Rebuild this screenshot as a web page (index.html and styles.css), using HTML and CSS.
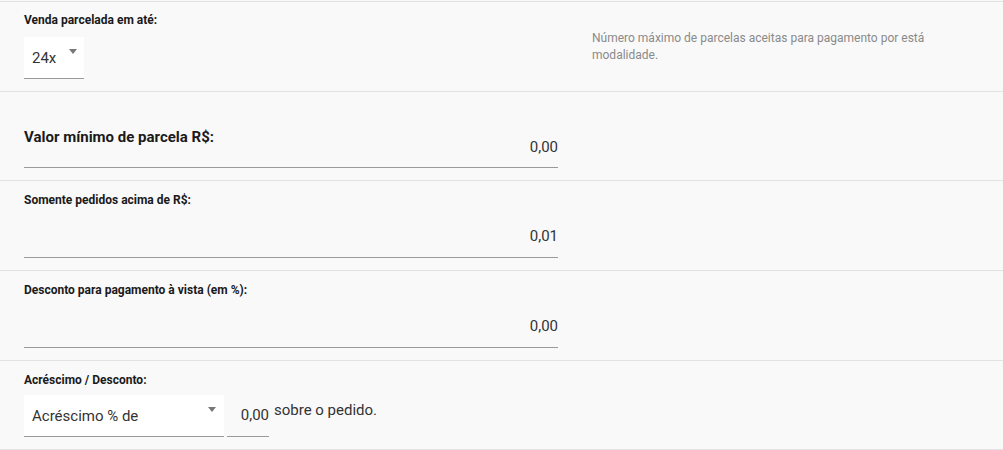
FILE: index.html
```html
<!DOCTYPE html>
<html lang="pt-BR">
<head>
<meta charset="utf-8">
<title>Parcelamento</title>
<link rel="stylesheet" href="styles.css">
</head>
<body>
<div class="form">
  <section class="row row-split">
    <div class="col-main">
      <div class="label">Venda parcelada em até:</div>
      <div class="select select-small">
        <span class="select-text">24x</span>
        <span class="caret"></span>
      </div>
    </div>
    <p class="help">Número máximo de parcelas aceitas para pagamento por está modalidade.</p>
  </section>

  <section class="row row-big">
    <div class="field-inline">
      <span class="label-big">Valor mínimo de parcela R$:</span>
      <span class="value-inline">0,00</span>
    </div>
  </section>

  <section class="row">
    <div class="label">Somente pedidos acima de R$:</div>
    <div class="input">0,01</div>
  </section>

  <section class="row">
    <div class="label">Desconto para pagamento à vista (em %):</div>
    <div class="input">0,00</div>
  </section>

  <section class="row">
    <div class="label">Acréscimo / Desconto:</div>
    <div class="combo">
      <div class="select select-wide">
        <span class="select-text">Acréscimo % de</span>
        <span class="caret"></span>
      </div>
      <div class="input-small">0,00</div>
      <span class="suffix">sobre o pedido.</span>
    </div>
  </section>
</div>
</body>
</html>
```

FILE: styles.css
```css
html, body {
  margin: 0;
  padding: 0;
  background: #f9f9f9;
  font-family: Roboto, "Liberation Sans", Arial, sans-serif;
  color: #212121;
}

.form {
  padding-top: 1px;
  width: 1003px;
}

.row {
  border-top: 1px solid #e2e2e2;
  padding: 12px 24px 12px;
}

.row:last-child {
  border-bottom: 1px solid #e2e2e2;
}

.row-split {
  display: flex;
  padding-top: 11px;
}

.col-main {
  width: 534px;
  flex: none;
}

.label {
  font-size: 12px;
  font-weight: 700;
  line-height: 14px;
  color: #1a1a1a;
}

.select {
  background: #ffffff;
  border-bottom: 1px solid #9a9a9a;
  position: relative;
  box-sizing: border-box;
  height: 42px;
  display: flex;
  align-items: center;
  padding-left: 8px;
  font-size: 15px;
  color: #333;
}

.select-small {
  width: 60px;
  margin-top: 10px;
}

.select-wide {
  width: 200px;
  margin-top: 8px;
}

.caret {
  position: absolute;
  top: 12px;
  right: 7px;
  width: 0;
  height: 0;
  border-left: 4px solid transparent;
  border-right: 4px solid transparent;
  border-top: 5px solid #777;
}

.select-wide .caret {
  right: 8px;
}

.help {
  margin: 17px 0 0 34px;
  width: 360px;
  font-size: 12px;
  line-height: 17px;
  color: #8a8a8a;
}

.row-big {
  padding-top: 37px;
}

.field-inline {
  width: 534px;
  height: 39px;
  box-sizing: border-box;
  border-bottom: 1px solid #9a9a9a;
  display: flex;
  justify-content: space-between;
}

.label-big {
  align-self: flex-start;
  font-size: 15px;
  font-weight: 700;
  line-height: 17px;
  color: #1a1a1a;
}

.value-inline {
  align-self: flex-end;
  font-size: 15px;
  line-height: 18px;
  padding-bottom: 11px;
  color: #333;
}

.input {
  width: 534px;
  box-sizing: border-box;
  margin-top: 10px;
  height: 41px;
  border-bottom: 1px solid #9a9a9a;
  text-align: right;
  font-size: 15px;
  line-height: 38px;
  color: #333;
}

.combo {
  display: flex;
  align-items: flex-end;
}

.input-small {
  width: 42px;
  margin-left: 3px;
  box-sizing: border-box;
  height: 42px;
  border-bottom: 1px solid #9a9a9a;
  text-align: right;
  font-size: 15px;
  line-height: 40px;
  color: #333;
}

.suffix {
  align-self: flex-start;
  margin-left: 5px;
  margin-top: 14px;
  font-size: 15px;
  line-height: 18px;
  color: #333;
}
```
